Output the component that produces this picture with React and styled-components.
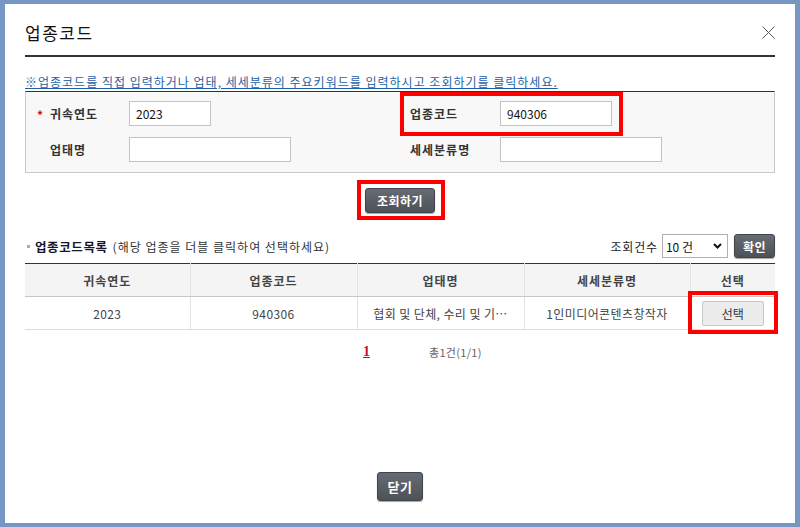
import styled, { createGlobalStyle } from "styled-components";

const GlobalStyle = createGlobalStyle`
  html, body {
    margin: 0;
    padding: 0;
    background: #7597c2;
  }
  body {
    padding: 4px 5px 4px 5px;
    font-family: "Noto Sans CJK KR", "Noto Sans", sans-serif;
  }
`;

const Window = styled.div`
  box-sizing: border-box;
  width: 790px;
  height: 519px;
  background: #fff;
  padding: 0 20px;
  display: flex;
  flex-direction: column;
`;

const Header = styled.div`
  display: flex;
  align-items: flex-start;
  justify-content: space-between;
  padding-top: 18px;
  box-sizing: border-box;
  border-bottom: 2px solid #333;
  height: 53px;
`;

const Title = styled.h1`
  margin: 0;
  font-size: 17px;
  line-height: 22px;
  font-weight: 400;
  color: #111;
  letter-spacing: 1.5px;
`;

const CloseIcon = styled.button`
  border: 0;
  background: none;
  padding: 0;
  margin: 4px 0 0;
  width: 13px;
  height: 13px;
  display: flex;
`;

const Notice = styled.p`
  margin: 17px 0 1px;
  font-size: 12px;
  line-height: 16px;
  color: #1f5fa8;
  text-decoration: underline;
  letter-spacing: 1px;
`;

const SearchBox = styled.div`
  display: grid;
  grid-template-columns: 1fr 1fr;
  row-gap: 11px;
  padding: 9px 0 10px;
  background: #f8f8f8;
  border: 1px solid #c8c8c8;
  border-top-color: #333;
`;

const Field = styled.div`
  display: flex;
  align-items: center;
  height: 25px;
  padding-left: ${(p) => (p.$indent ? 10 : 11)}px;
`;

const Star = styled.span`
  width: 13px;
  color: #c0141b;
  font-size: 12px;
  font-weight: 700;
  line-height: 12px;
  padding-top: 3px;
  box-sizing: border-box;
`;

const Label = styled.label`
  width: ${(p) => p.$w}px;
  font-size: 12px;
  font-weight: 700;
  color: #333;
  letter-spacing: 1px;
`;

const Input = styled.input`
  box-sizing: border-box;
  width: ${(p) => p.$w}px;
  height: 25px;
  border: 1px solid #c3c3c3;
  background: #fff;
  padding: 0 6px;
  font-family: inherit;
  font-size: 12px;
  color: #111;
  outline: none;
`;

const Highlight = styled.span`
  position: relative;
  display: inline-flex;
  align-items: center;
  &::after {
    content: "";
    position: absolute;
    left: ${(p) => p.$l}px;
    right: ${(p) => p.$r}px;
    top: ${(p) => p.$t}px;
    bottom: ${(p) => p.$b}px;
    border: 4px solid #f00;
    pointer-events: none;
  }
`;

const ButtonRow = styled.div`
  display: flex;
  justify-content: center;
  margin-top: 15px;
`;

const DarkButton = styled.button`
  box-sizing: border-box;
  height: ${(p) => p.$h || 25}px;
  padding: 0 ${(p) => p.$px || 11}px;
  border: 1px solid #3f434a;
  border-radius: 3px;
  background: linear-gradient(#666c74, #4d5158);
  color: #fff;
  font-family: inherit;
  font-size: ${(p) => p.$fs || 12}px;
  font-weight: 700;
  letter-spacing: 0.5px;
  box-shadow: 0 1px 1px rgba(0, 0, 0, 0.35);
`;

const ListHead = styled.div`
  display: flex;
  align-items: center;
  justify-content: space-between;
  margin-top: 21px;
  height: 24px;
`;

const ListTitle = styled.div`
  display: flex;
  align-items: center;
  font-size: 12px;
  color: #333;
  letter-spacing: 1px;
`;

const Bullet = styled.span`
  width: 3px;
  height: 3px;
  background: #aaa;
  margin: 0 5px 0 2px;
`;

const ListName = styled.strong`
  font-size: 12.5px;
  color: #161630;
  margin-right: 5px;
  letter-spacing: 0.6px;
`;

const Tools = styled.div`
  display: flex;
  align-items: center;
  gap: 6px;
  font-size: 12px;
  color: #222;
`;

const CountLabel = styled.span`
  margin-right: -2px;
  letter-spacing: 0.8px;
`;

const Select = styled.div`
  box-sizing: border-box;
  width: 66px;
  height: 24px;
  border: 1px solid #b0b0b0;
  background: #fff;
  display: flex;
  align-items: center;
  justify-content: space-between;
  padding: 0 5px 0 3px;
  font-size: 12px;
  color: #111;
`;

const Table = styled.table`
  margin-top: 5px;
  width: 750px;
  border-collapse: collapse;
  table-layout: fixed;
  border-top: 1px solid #333;
  font-size: 12px;
`;

const Th = styled.th`
  height: 32px;
  padding: 0;
  background: #f4f4f4;
  color: #444;
  font-weight: 700;
  letter-spacing: 1px;
  border-bottom: 1px solid #c6c6c6;
  border-left: 1px solid #e2e2e2;
  &:first-child {
    border-left: 0;
  }
`;

const Td = styled.td`
  height: 32px;
  padding: 0 6px;
  color: #444;
  text-align: center;
  border-bottom: 1px solid #dcdcdc;
  border-left: 1px solid #e2e2e2;
  white-space: nowrap;
  letter-spacing: 0.4px;
  &:first-child {
    border-left: 0;
  }
`;

const PickButton = styled.button`
  box-sizing: border-box;
  width: 62px;
  height: 25px;
  border: 1px solid #c8c8c8;
  border-radius: 2px;
  background: #ececec;
  font-family: inherit;
  font-size: 12px;
  color: #333;
`;

const Pager = styled.div`
  display: flex;
  align-items: center;
  gap: 59px;
  margin-top: 14px;
  padding-left: 338px;
  line-height: 16px;
`;

const PageNum = styled.a`
  font-family: "Liberation Serif", serif;
  font-weight: 700;
  font-size: 14px;
  color: #c4102a;
  text-decoration: underline;
`;

const Total = styled.span`
  font-size: 11px;
  color: #666;
  letter-spacing: 0.3px;
`;

const Footer = styled.div`
  margin-top: auto;
  margin-bottom: 22px;
  display: flex;
  justify-content: center;
`;

const columns = [
  { name: "귀속연도", w: 165 },
  { name: "업종코드", w: 167 },
  { name: "업태명", w: 167 },
  { name: "세세분류명", w: 166 },
  { name: "선택", w: 85 },
];

export default function App() {
  return (
    <>
      <GlobalStyle />
      <Window>
        <Header>
          <Title>업종코드</Title>
          <CloseIcon aria-label="닫기">
            <svg width="13" height="13" viewBox="0 0 13 13">
              <path d="M0.5 0.5L12.5 12.5M12.5 0.5L0.5 12.5" stroke="#555" strokeWidth="1" fill="none" />
            </svg>
          </CloseIcon>
        </Header>

        <Notice>※업종코드를 직접 입력하거나 업태, 세세분류의 주요키워드를 입력하시고 조회하기를 클릭하세요.</Notice>

        <SearchBox>
          <Field>
            <Star>*</Star>
            <Label $w={79}>귀속연도</Label>
            <Input $w={82} defaultValue="2023" />
          </Field>
          <Field $indent>
            <Highlight $l={-10} $r={-11} $t={-9} $b={-10}>
              <Label $w={90}>업종코드</Label>
              <Input $w={112} defaultValue="940306" />
            </Highlight>
          </Field>
          <Field>
            <Star />
            <Label $w={79}>업태명</Label>
            <Input $w={162} />
          </Field>
          <Field $indent>
            <Label $w={90}>세세분류명</Label>
            <Input $w={162} />
          </Field>
        </SearchBox>

        <ButtonRow>
          <Highlight $l={-8} $r={-10} $t={-8} $b={-7}>
            <DarkButton>조회하기</DarkButton>
          </Highlight>
        </ButtonRow>

        <ListHead>
          <ListTitle>
            <Bullet />
            <ListName>업종코드목록</ListName>
            (해당 업종을 더블 클릭하여 선택하세요)
          </ListTitle>
          <Tools>
            <CountLabel>조회건수</CountLabel>
            <Select>
              <span>10 건</span>
              <svg width="9" height="6" viewBox="0 0 9 6">
                <path d="M1 1L4.5 4.5L8 1" stroke="#111" strokeWidth="2" fill="none" />
              </svg>
            </Select>
            <DarkButton $h={24} $px={8}>확인</DarkButton>
          </Tools>
        </ListHead>

        <Table>
          <colgroup>
            {columns.map((c) => (
              <col key={c.name} style={{ width: c.w }} />
            ))}
          </colgroup>
          <thead>
            <tr>
              {columns.map((c) => (
                <Th key={c.name}>{c.name}</Th>
              ))}
            </tr>
          </thead>
          <tbody>
            <tr>
              <Td>2023</Td>
              <Td>940306</Td>
              <Td>협회 및 단체, 수리 및 기…</Td>
              <Td>1인미디어콘텐츠창작자</Td>
              <Td>
                <Highlight $l={-14} $r={-14} $t={-10} $b={-8}>
                  <PickButton>선택</PickButton>
                </Highlight>
              </Td>
            </tr>
          </tbody>
        </Table>

        <Pager>
          <PageNum>1</PageNum>
          <Total>총1건(1/1)</Total>
        </Pager>

        <Footer>
          <DarkButton $h={29} $px={10} $fs={13}>닫기</DarkButton>
        </Footer>
      </Window>
    </>
  );
}
